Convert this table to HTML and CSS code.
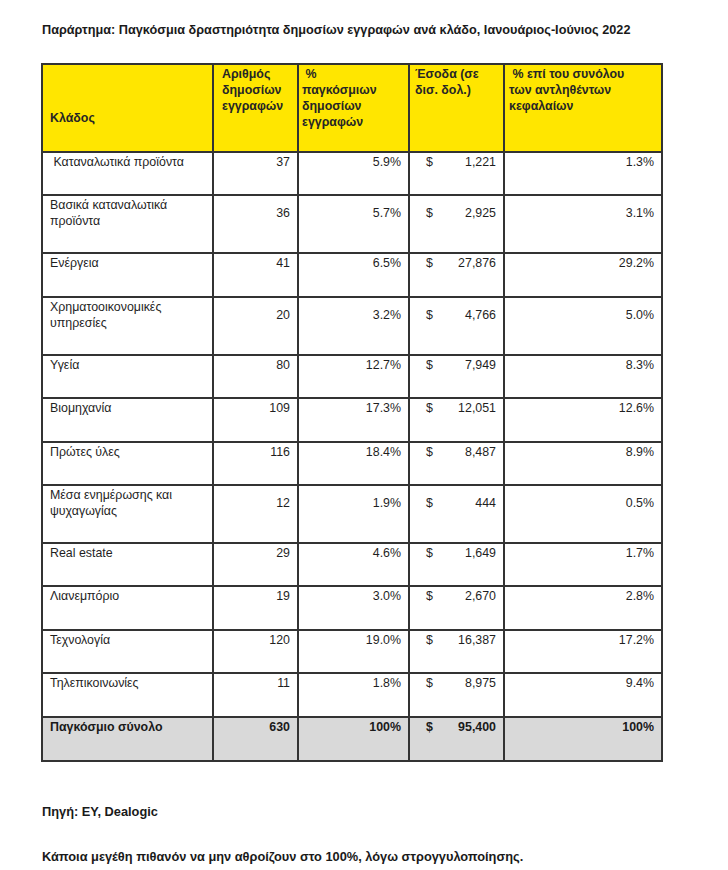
FILE: index.html
```html
<!DOCTYPE html>
<html lang="el">
<head>
<meta charset="utf-8">
<link rel="stylesheet" href="styles.css">
</head>
<body>
<div class="page">
  <h1 class="title">Παράρτημα: Παγκόσμια δραστηριότητα δημοσίων εγγραφών ανά κλάδο, Ιανουάριος-Ιούνιος 2022</h1>
  <table class="ipo">
    <colgroup>
      <col class="c1"><col class="c2"><col class="c3"><col class="c4"><col class="c5">
    </colgroup>
    <thead>
      <tr>
        <th class="h-sector">Κλάδος</th>
        <th class="h-num">Αριθμός<br>δημοσίων<br>εγγραφών</th>
        <th class="h-pct">&nbsp;%<br>παγκόσμιων<br>δημοσίων<br>εγγραφών</th>
        <th class="h-rev">Έσοδα (σε<br>δισ. δολ.)</th>
        <th class="h-cap">&nbsp;% επί του συνόλου<br>των αντληθέντων<br>κεφαλαίων</th>
      </tr>
    </thead>
    <tbody>
      <tr class="one"><td class="lab">&nbsp;Καταναλωτικά προϊόντα</td><td class="num">37</td><td class="num">5.9%</td><td class="rev"><span>$</span><span>1,221</span></td><td class="num">1.3%</td></tr>
      <tr class="two"><td class="lab">Βασικά καταναλωτικά<br>προϊόντα</td><td class="num">36</td><td class="num">5.7%</td><td class="rev"><span>$</span><span>2,925</span></td><td class="num">3.1%</td></tr>
      <tr class="one"><td class="lab">Ενέργεια</td><td class="num">41</td><td class="num">6.5%</td><td class="rev"><span>$</span><span>27,876</span></td><td class="num">29.2%</td></tr>
      <tr class="two"><td class="lab">Χρηματοοικονομικές<br>υπηρεσίες</td><td class="num">20</td><td class="num">3.2%</td><td class="rev"><span>$</span><span>4,766</span></td><td class="num">5.0%</td></tr>
      <tr class="one"><td class="lab">Υγεία</td><td class="num">80</td><td class="num">12.7%</td><td class="rev"><span>$</span><span>7,949</span></td><td class="num">8.3%</td></tr>
      <tr class="one"><td class="lab">Βιομηχανία</td><td class="num">109</td><td class="num">17.3%</td><td class="rev"><span>$</span><span>12,051</span></td><td class="num">12.6%</td></tr>
      <tr class="one"><td class="lab">Πρώτες ύλες</td><td class="num">116</td><td class="num">18.4%</td><td class="rev"><span>$</span><span>8,487</span></td><td class="num">8.9%</td></tr>
      <tr class="two"><td class="lab">Μέσα ενημέρωσης και<br>ψυχαγωγίας</td><td class="num">12</td><td class="num">1.9%</td><td class="rev"><span>$</span><span>444</span></td><td class="num">0.5%</td></tr>
      <tr class="one"><td class="lab">Real estate</td><td class="num">29</td><td class="num">4.6%</td><td class="rev"><span>$</span><span>1,649</span></td><td class="num">1.7%</td></tr>
      <tr class="one"><td class="lab">Λιανεμπόριο</td><td class="num">19</td><td class="num">3.0%</td><td class="rev"><span>$</span><span>2,670</span></td><td class="num">2.8%</td></tr>
      <tr class="one"><td class="lab">Τεχνολογία</td><td class="num">120</td><td class="num">19.0%</td><td class="rev"><span>$</span><span>16,387</span></td><td class="num">17.2%</td></tr>
      <tr class="one"><td class="lab">Τηλεπικοινωνίες</td><td class="num">11</td><td class="num">1.8%</td><td class="rev"><span>$</span><span>8,975</span></td><td class="num">9.4%</td></tr>
      <tr class="total"><td class="lab">Παγκόσμιο σύνολο</td><td class="num">630</td><td class="num">100%</td><td class="rev"><span>$</span><span>95,400</span></td><td class="num">100%</td></tr>
    </tbody>
  </table>
  <p class="note source">Πηγή: EY, Dealogic</p>
  <p class="note">Κάποια μεγέθη πιθανόν να μην αθροίζουν στο 100%, λόγω στρογγυλοποίησης.</p>
</div>
</body>
</html>
```

FILE: styles.css
```css
html, body {
  margin: 0;
  padding: 0;
  background: #ffffff;
}

body {
  font-family: "Liberation Sans", Arial, sans-serif;
  color: #1f1f1f;
}

.page {
  padding: 22px 0 0 42px;
}

.title {
  margin: 0;
  font-size: 12.7px;
  line-height: 16px;
  font-weight: bold;
  color: #1a1a1a;
}

.ipo {
  margin-top: 25px;
  margin-left: -1px;
  border-collapse: collapse;
  table-layout: fixed;
  width: 622px;
  font-size: 12.4px;
  line-height: 16px;
}

.c1 { width: 171px; }
.c2 { width: 85px; }
.c3 { width: 111px; }
.c4 { width: 95px; }
.c5 { width: 158px; }

.ipo th,
.ipo td {
  box-sizing: border-box;
  border: 2px solid #333333;
  vertical-align: top;
  padding: 1px 7px 0 7px;
}

.ipo th {
  background: #ffe600;
  font-weight: bold;
  text-align: left;
  height: 88px;
  color: #262626;
}

.ipo th.h-sector {
  vertical-align: bottom;
  padding-bottom: 25px;
  padding-left: 7px;
}
.ipo th.h-num { padding-left: 8px; }
.ipo th.h-pct { padding-left: 3px; }
.ipo th.h-rev { padding-left: 5px; }
.ipo th.h-cap { padding-left: 4px; }

.ipo td.lab { padding-left: 7px; }

.ipo td.num {
  text-align: right;
}

.ipo td.rev span:first-child {
  float: left;
  padding-left: 9px;
}
.ipo td.rev span:last-child {
  float: right;
}

.ipo tr.one td { height: 43.4px; }
.ipo tr.two td { height: 58px; }
.ipo tr.two td.num,
.ipo tr.two td.rev { padding-top: 9px; }

.ipo tr.total td {
  background: #d9d9d9;
  font-weight: bold;
  height: 44px;
  color: #1a1a1a;
}

.note {
  margin: 0;
  font-size: 12.8px;
  line-height: 16px;
  font-weight: bold;
  color: #1a1a1a;
}

.source {
  margin-top: 42px;
  margin-bottom: 29px;
}
```
